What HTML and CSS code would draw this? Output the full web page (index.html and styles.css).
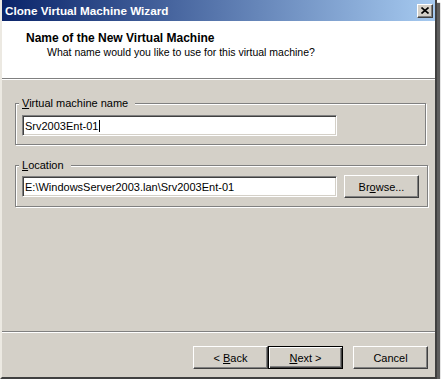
FILE: index.html
```html
<!DOCTYPE html>
<html lang="en">
<head>
    <meta charset="UTF-8">
    <title>Clone Virtual Machine Wizard</title>
    <link rel="stylesheet" href="styles.css">
</head>
<body>
    <div class="window">
        <!-- Title bar -->
        <div class="titlebar">
            <span class="title">Clone Virtual Machine Wizard</span>
            <span class="close-btn">
                <svg width="8" height="7" viewBox="0 0 8 7">
                    <path d="M0.5 0.5 L7.5 6.5 M7.5 0.5 L0.5 6.5" stroke="#000" stroke-width="1.6" fill="none"/>
                </svg>
            </span>
        </div>

        <!-- Wizard header -->
        <div class="header">
            <div class="header-title">Name of the New Virtual Machine</div>
            <div class="header-sub">What name would you like to use for this virtual machine?</div>
        </div>

        <!-- Page content -->
        <div class="content">
            <fieldset class="group">
                <legend><u>V</u>irtual machine name</legend>
                <div class="row">
                    <div class="textbox">Srv2003Ent-01<span class="caret"></span></div>
                </div>
            </fieldset>

            <fieldset class="group group-location">
                <legend><u>L</u>ocation</legend>
                <div class="row">
                    <div class="textbox">E:\WindowsServer2003.lan\Srv2003Ent-01</div>
                    <button class="btn">Br<u>o</u>wse...</button>
                </div>
            </fieldset>
        </div>

        <!-- Buttons -->
        <div class="footer">
            <button class="btn">&lt; <u>B</u>ack</button>
            <button class="btn btn-default"><u>N</u>ext &gt;</button>
            <button class="btn btn-cancel">Cancel</button>
        </div>
    </div>
</body>
</html>
```

FILE: styles.css
```css
body {
    margin: 0;
    background: #fff;
    font-family: "Liberation Sans", Arial, sans-serif;
    font-size: 11px;
    color: #000;
}
/* Window frame */
.window {
    box-sizing: border-box;
    width: 437px;
    height: 379px;
    display: flex;
    flex-direction: column;
    background: #d4d0c8;
    border: 2px solid;
    border-top: 0;
    border-color: #fff #404040 #404040 #ece9e2;
    box-shadow: 3px 3px 1px rgba(40, 40, 40, 0.75);
}
/* Title bar */
.titlebar {
    height: 21px;
    display: flex;
    align-items: center;
    justify-content: space-between;
    padding: 0 2px 0 3px;
    background: linear-gradient(to right, #0a246a, #a6caf0);
}
.title {
    color: #fff;
    font-weight: bold;
    font-size: 11.7px;
}
.close-btn {
    box-sizing: border-box;
    width: 16px;
    height: 14px;
    display: flex;
    align-items: center;
    justify-content: center;
    background: #d4d0c8;
    border: 1px solid;
    border-color: #fff #404040 #404040 #fff;
    box-shadow: inset -1px -1px #808080;
}
/* Wizard header */
.header {
    height: 58px;
    box-sizing: border-box;
    padding: 11px 0 0 24px;
    background: #fff;
    border-bottom: 1px solid #808080;
    box-shadow: 0 1px 0 #fff;
    line-height: 13px;
}
.header-title {
    font-weight: bold;
    font-size: 12px;
}
.header-sub {
    margin-top: 1px;
    padding-left: 21px;
    font-size: 10.5px;
}
/* Group boxes */
.content {
    flex: 1;
}
.group {
    margin: 18px 9px 0 13px;
    padding: 5px 8px 8px 6px;
    border: 1px solid #808080;
    box-shadow: inset 1px 1px #fff, 1px 1px #fff;
}
.group-location {
    margin-top: 14px;
    padding-top: 3px;
}
.group legend {
    margin-left: -3px;
    padding: 0 7px 0 3px;
    line-height: 13px;
    background: #d4d0c8;
}
.row {
    display: flex;
    align-items: center;
}
.textbox {
    box-sizing: border-box;
    width: 315px;
    height: 21px;
    display: flex;
    align-items: center;
    padding-left: 2px;
    background: #fff;
    border: 1px solid;
    border-color: #808080 #fff #fff #808080;
    box-shadow: inset 1px 1px #404040, inset -1px -1px #d4d0c8;
    white-space: nowrap;
}
.caret {
    display: inline-block;
    width: 1px;
    height: 12px;
    margin-left: 1px;
    background: #000;
}
/* Buttons */
.btn {
    box-sizing: border-box;
    width: 75px;
    height: 23px;
    padding: 0;
    font-family: inherit;
    font-size: 11px;
    color: #000;
    background: #d4d0c8;
    border: 1px solid;
    border-color: #fff #404040 #404040 #fff;
    box-shadow: inset -1px -1px #808080;
}
.row .btn {
    margin-left: 7px;
}
.btn-default {
    border-color: #000;
    box-shadow: inset 1px 1px #fff, inset -1px -1px #404040, inset -2px -2px #808080;
}
.btn-cancel {
    margin-left: 10px;
}
.footer {
    height: 46px;
    box-sizing: border-box;
    display: flex;
    justify-content: flex-end;
    align-items: flex-start;
    padding: 14px 7px 0 0;
    border-top: 1px solid #808080;
    box-shadow: inset 0 1px #fff;
}
```
